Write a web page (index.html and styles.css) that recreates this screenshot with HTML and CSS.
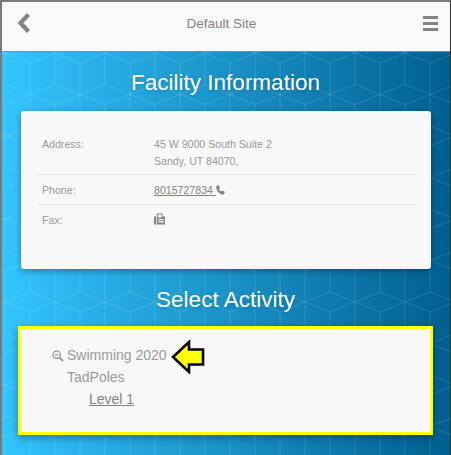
FILE: index.html
```html
<!DOCTYPE html>
<html lang="en">
<head>
  <meta charset="UTF-8">
  <title>Facility Information</title>
  <meta name="viewport" content="width=device-width, initial-scale=1">
  <link rel="stylesheet" href="styles.css">
</head>
<body>
  <div class="frame">
    <header class="top-bar">
      <svg class="back-icon" width="14" height="20" viewBox="0 0 14 20"><path d="M10.5 1.5 L2.5 10 L10.5 18.5" fill="none" stroke="#85827f" stroke-width="4.2"/></svg>
      <span class="site-name">Default Site</span>
      <div class="menu-icon"><span></span><span></span><span></span></div>
    </header>

    <main class="content">
      <!-- hex background -->
      <svg class="hex-bg" width="100%" height="100%">
        <defs>
          <pattern id="hex" x="3" y="1" width="50" height="83" patternUnits="userSpaceOnUse">
            <path d="M0 0 L25 10 L50 0 M0 0 L25 -10 L50 0 M0 83 L25 73 L50 83 M25 41.5 L50 31.5 M25 41.5 L50 51.5 M25 41.5 L0 31.5 M25 41.5 L0 51.5 M0 0 V31.5 M50 0 V31.5 M0 51.5 V83 M50 51.5 V83 M25 10 V73" fill="none" stroke="#fff" stroke-opacity="0.12" stroke-width="1"/>
          </pattern>
        </defs>
        <rect width="100%" height="100%" fill="url(#hex)"/>
      </svg>

      <h1>Facility Information</h1>
      <section class="info-card">
        <div class="info-row">
          <div class="info-label">Address:</div>
          <div class="info-value">45 W 9000 South Suite 2<br>Sandy, UT 84070,</div>
        </div>
        <div class="info-row">
          <div class="info-label">Phone:</div>
          <div class="info-value">
            <a href="#">8015727834 </a>
            <svg class="phone-icon" width="9" height="10" viewBox="0 0 9 10"><path d="M1 .6 L2.9 .2 L4 3 L2.9 4 C3.3 5.2 4 6 5.1 6.5 L6.1 5.4 L8.8 6.8 L8.2 8.9 C7.6 9.6 6.8 9.7 5.9 9.4 C3 8.4 1 6.200 .3 3.200 C.1 2.200 .4 1.200 1 .6 Z" fill="#85827f"/></svg>
          </div>
        </div>
        <div class="info-row">
          <div class="info-label">Fax:</div>
          <div class="info-value">
            <svg class="fax-icon" width="11" height="12" viewBox="0 0 11 12"><path d="M0 3.500 H2 V11.500 H0 Z M2.800 3.500 V.5 H8.500 V3.500 H11 V11.500 H2.800 Z M4 1.500 V4.500 H7.500 V1.500 Z M4.200 6 V7.200 H9.800 V6 Z M4.200 8.300 V9.500 H9.800 V8.300 Z" fill="#85827f" fill-rule="evenodd"/></svg>
          </div>
        </div>
      </section>

      <h2>Select Activity</h2>
      <section class="activity-card">
        <div class="activity-line">
          <svg class="zoom-icon" width="12" height="12" viewBox="0 0 12 12"><circle cx="4.700" cy="4.700" r="3.700" fill="none" stroke="#85827f" stroke-width="1.100"/><path d="M2.900 4.700 H6.500" stroke="#85827f" stroke-width="1"/><path d="M7.500 7.500 L11 11" stroke="#85827f" stroke-width="1.600"/></svg>
          Swimming 2020
        </div>
        <div class="activity-line">TadPoles</div>
        <div class="activity-line level"><a href="#">Level 1</a></div>
        <!-- callout arrow -->
        <svg class="callout-arrow" width="34" height="34" viewBox="0 0 34 34"><path d="M2 17 L18 2 V9.500 H32 V24.500 H18 V32 Z" fill="#ffff00" stroke="#000" stroke-width="2.600"/></svg>
      </section>
    </main>
  </div>
</body>
</html>
```

FILE: styles.css
```css
* { box-sizing:border-box; margin:0; padding:0 }
body {
  font-family: "Liberation Sans", Arial, sans-serif;
  background: #fff;
  overflow: hidden;
}

.frame {
  height: 455px;
  display: flex;
  flex-direction: column;
  border-top: 2px solid #7a7a7a;
  border-left: 2px solid #7a7a7a;
  border-right: 1px solid #333;
}

.top-bar {
  height: 50px;
  flex: none;
  display: flex;
  align-items: center;
  justify-content: space-between;
  padding: 0 12px 7px 16px;
  background: #f9f9f9;
  border-bottom: 1px solid #8a8a8a;
}
.site-name {
  font-size: 13.5px;
  color: #85827f;
  margin-right: 12px;
}
.menu-icon {
  display: flex;
  flex-direction: column;
  gap: 3px;
  width: 15px;
}
.menu-icon span {
  height: 3px;
  background: #85827f;
}

.content {
  position: relative;
  flex: 1;
  padding: 15px 17px 0 16px;
  background: linear-gradient(to right, #33c5ff, #005f90);
}
.hex-bg {
  position: absolute;
  top: 0; left: 0;
}

h1, h2 {
  position: relative;
  font-weight: normal;
  font-size: 22.5px;
  line-height: 32px;
  text-align: center;
  color: #fff;
  text-shadow: 0 1px 4px rgba(0,0,0,0.2);
}

.info-card {
  position: relative;
  height: 158px;
  margin: 12px 2px 0 3px;
  padding: 25px 15px 0 16px;
  background: #f8f8f8;
  border-radius: 3px;
  box-shadow: 0 2px 6px rgba(0,0,0,0.35);
}
.info-row {
  display: flex;
  padding: 0 5px 5px;
  margin-bottom: 7px;
  font-size: 10.6px;
  line-height: 17px;
  color: #999;
  border-bottom: 1px solid #e3e3e3;
}
.info-row:first-child { padding-bottom: 4px; }
.info-row:last-child { border-bottom: none; }
.info-label { width: 112px; }
.info-value a { color: #85827f; }
.phone-icon { vertical-align: -1px; }
.fax-icon { vertical-align: -1px; }

h2 {
  margin-top: 15px;
}

.activity-card {
  position: relative;
  height: 109px;
  margin: 10px 0 0 0;
  padding: 15px 0 0 33px;
  background: #f8f8f8;
  border: 3px solid #ffff00;
  box-shadow: 0 3px 8px rgba(0,0,0,0.35);
}
.activity-line {
  position: relative;
  font-size: 14px;
  line-height: 22px;
  color: #999;
  margin-left: 13px;
}
.level { margin-left: 35px; }
.level a { color: #85827f; }
.zoom-icon {
  position: absolute;
  left: -15px;
  top: 6px;
}
.callout-arrow {
  position: absolute;
  left: 150px;
  top: 11px;
}
```
